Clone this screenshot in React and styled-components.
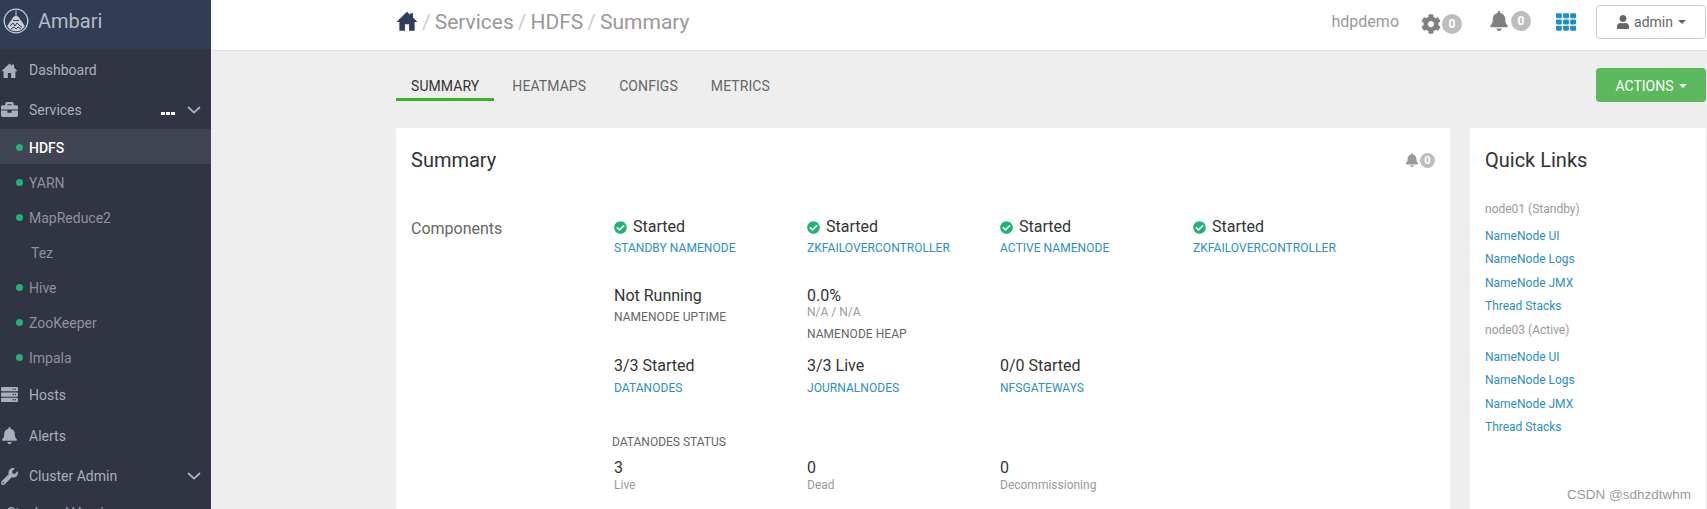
import styled, { createGlobalStyle } from "styled-components";
import {
  FaBriefcase,
  FaServer,
  FaBell,
  FaWrench,
  FaCog,
  FaUser,
  FaTh,
  FaCheckCircle,
} from "react-icons/fa";

const GlobalStyles = createGlobalStyle`
  html, body {
    margin: 0;
    padding: 0;
    height: 100%;
    overflow: hidden;
    background: #eeeeee;
  }

  body {
    font-family: Roboto, "Liberation Sans", sans-serif;
    color: #333333;
  }
`;

const Page = styled.div`
  display: grid;
  grid-template-columns: 211px 1fr;
  height: 509px;
  overflow: hidden;
`;

const Sidebar = styled.aside`
  background: #313443;
  overflow: hidden;
`;

const Brand = styled.div`
  display: flex;
  align-items: center;
  gap: 9px;
  height: 49px;
  padding: 0 0 7px 3px;
  box-sizing: border-box;
  background: #313d54;
  color: #b4bbc8;
  font-size: 20px;
  margin-bottom: 1px;
`;

const NavItem = styled.div`
  display: flex;
  align-items: center;
  height: ${(p) => p.$height || 40}px;
  padding-left: ${(p) => p.$indent || 1}px;
  color: #a8b0be;
  font-size: 14px;

  svg.main {
    width: 17px;
    height: 17px;
    margin-right: 11px;
    flex: none;
  }
`;

const Dots = styled.span`
  margin-left: auto;
  margin-right: 12px;
  margin-top: 8px;
  display: flex;
  gap: 1px;

  i {
    width: 4px;
    height: 3px;
    background: #ffffff;
  }
`;

const ChevronMark = styled.svg`
  width: 14px;
  height: 8px;
  margin-right: 10px;
  margin-left: ${(p) => (p.$push ? "auto" : "0")};
  flex: none;
`;

const SubItem = styled.div`
  display: flex;
  align-items: center;
  height: 35px;
  padding: 2px 0 0 16px;
  box-sizing: border-box;
  font-size: 14px;
  font-weight: ${(p) => (p.$active ? 500 : 400)};
  color: ${(p) => (p.$active ? "#ffffff" : "#8e929e")};
  background: ${(p) => (p.$active ? "#404350" : "transparent")};
`;

const Dot = styled.span`
  width: 7px;
  height: 7px;
  border-radius: 50%;
  margin-right: ${(p) => (p.$off ? 8 : 6)}px;
  background: ${(p) => (p.$off ? "transparent" : "#1eb475")};
  flex: none;
`;

const Main = styled.main`
  display: flex;
  flex-direction: column;
  min-width: 0;
`;

const Topbar = styled.header`
  display: flex;
  align-items: center;
  height: 50px;
  padding: 0 1px 0 185px;
  background: #ffffff;
  border-bottom: 1px solid #dfdfdf;
  flex: none;
`;

const Crumbs = styled.div`
  display: flex;
  align-items: center;
  font-size: 21px;
  color: #999999;
  margin-top: -6px;

  svg {
    width: 22px;
    height: 22px;
    color: #2c3e5c;
    margin-top: -3px;
  }

  i {
    font-style: normal;
    color: #cccccc;
    margin: 0 4px;
  }
`;

const TopRight = styled.div`
  display: flex;
  align-items: center;
  margin-left: auto;
  height: 100%;
`;

const HostName = styled.span`
  font-size: 16px;
  color: #999999;
  margin-right: 22px;
  margin-top: -8px;
`;

const IconBadge = styled.div`
  display: flex;
  align-items: center;
  gap: ${(p) => p.$gap ?? 3}px;
  margin-right: ${(p) => p.$right ?? 0}px;
  margin-top: ${(p) => p.$top ?? 0}px;
  color: ${(p) => p.$color || "#808080"};

  svg {
    width: ${(p) => p.$icon || 20}px;
    height: ${(p) => p.$icon || 20}px;
  }
`;

const Badge = styled.span`
  display: flex;
  align-items: center;
  justify-content: center;
  width: ${(p) => p.$size || 20}px;
  height: ${(p) => p.$size || 20}px;
  border-radius: 50%;
  background: #bdbdbd;
  color: #ffffff;
  font-size: ${(p) => (p.$size ? 11 : 12)}px;
  font-weight: 700;
`;

const UserButton = styled.button`
  display: flex;
  align-items: center;
  justify-content: center;
  width: 110px;
  height: 34px;
  margin-top: -6px;
  padding: 0;
  border: 1px solid #cccccc;
  border-radius: 4px;
  background: #ffffff;
  color: #666666;
  font: 14px Roboto, sans-serif;

  svg {
    width: 14px;
    height: 14px;
    margin-right: 4px;
  }
`;

const Caret = styled.span`
  width: 0;
  height: 0;
  margin-left: 5px;
  border-top: 4px solid currentColor;
  border-left: 4px solid transparent;
  border-right: 4px solid transparent;
`;

const Content = styled.div`
  padding: 17px 1px 0 185px;
`;

const TabBar = styled.div`
  display: flex;
  align-items: flex-start;
  height: 60px;
`;

const Tab = styled.div`
  height: 30px;
  line-height: 36px;
  padding: 0 15px;
  margin-right: 3px;
  font-size: 14px;
  letter-spacing: 0.08px;
  color: ${(p) => (p.$active ? "#333333" : "#666666")};
  border-bottom: 3px solid ${(p) => (p.$active ? "#3fae2a" : "transparent")};
  box-sizing: content-box;
`;

const ActionButton = styled.button`
  display: flex;
  align-items: center;
  justify-content: center;
  width: 110px;
  height: 34px;
  margin-left: auto;
  padding: 1px 0 0;
  border: none;
  border-radius: 4px;
  background: #5cb85c;
  color: #ffffff;
  font: 14px Roboto, sans-serif;
`;

const Columns = styled.div`
  display: grid;
  grid-template-columns: 1054px 236px;
  gap: 20px;
`;

const Card = styled.section`
  background: #ffffff;
  border-radius: 2px;
  height: 400px;
  padding: 0 15px;
  box-sizing: border-box;
`;

const CardHead = styled.div`
  display: flex;
  align-items: center;
  justify-content: space-between;
  height: 64px;
  font-size: 20px;
  color: #333333;
`;

const SummaryBody = styled.div`
  display: grid;
  grid-template-columns: 203px 1fr;
  margin-top: 24px;
`;

const RowTitle = styled.div`
  font-size: 16px;
  color: #666666;
  line-height: 22px;
  margin-top: 2px;
`;

const MetricGrid = styled.div`
  display: grid;
  grid-template-columns: repeat(4, 193px);
  margin-bottom: ${(p) => p.$after || 0}px;
`;

const Value = styled.div`
  display: flex;
  align-items: center;
  gap: 6px;
  font-size: 16px;
  line-height: 22px;
  color: #333333;

  svg {
    width: 13px;
    height: 13px;
    color: #1eb475;
  }
`;

const Note = styled.div`
  font-size: 12px;
  line-height: 14px;
  margin-top: -2px;
  color: #999999;
`;

const Label = styled.div`
  font-size: 12px;
  line-height: 16px;
  letter-spacing: 0.05px;
  margin-top: ${(p) => p.$top ?? 2}px;
  color: ${(p) => (p.$link ? "#2a8fc4" : "#666666")};
`;

const StatusTitle = styled.div`
  font-size: 12px;
  line-height: 16px;
  color: #666666;
  margin: 0 0 7px -2px;
`;

const Hint = styled.div`
  font-size: 12px;
  line-height: 14px;
  margin-top: -1px;
  color: #999999;
`;

const NodeName = styled.div`
  font-size: 12px;
  line-height: 16px;
  color: #999999;
  margin-top: ${(p) => p.$before || 0}px;
  margin-bottom: 10.5px;
`;

const QuickLink = styled.a`
  display: block;
  font-size: 12px;
  line-height: 16px;
  height: 23.5px;
  color: #2a8fc4;
`;

const QuickBody = styled.div`
  margin-top: 9px;
`;

const Watermark = styled.div`
  position: absolute;
  right: 16px;
  bottom: 7px;
  font: 13.5px "Liberation Sans", sans-serif;
  color: #9a9a9a;
`;

function HomeIcon({ className }) {
  return (
    <svg className={className} viewBox="0 0 24 24" fill="currentColor">
      <path d="M12 2 0.5 13h3.2v9.5h6v-7h4.6v7h6V13h3.2L18.5 8.2V3.5h-3v1.9z" />
    </svg>
  );
}

function Chevron({ push }) {
  return (
    <ChevronMark $push={push} viewBox="0 0 14 8">
      <path d="M1 1l6 5.6L13 1" fill="none" stroke="#9fb4cc" strokeWidth="1.8" />
    </ChevronMark>
  );
}

function AmbariLogo() {
  return (
    <svg width="26" height="26" viewBox="0 0 26 26">
      <circle cx="13" cy="13" r="11.8" fill="none" stroke="#c9ced8" strokeWidth="1.3" />
      <path d="M13 2.5v6" stroke="#c9ced8" strokeWidth="1" />
      <path
        d="M13 8c2.4 0 3.4 1.6 4 3.4 1.6 1.4 3.2 3.8 4.8 6.8-1.8 3-5 5-8.8 5s-7-2-8.8-5c1.6-3 3.2-5.4 4.8-6.8C9.6 9.6 10.6 8 13 8z"
        fill="#c9ced8"
      />
      <path
        d="M7 18l3-3 2 3 2-3 3 3 2 1M8 21l3-2 2 2 2-2 3 2M10 12.5h6"
        fill="none"
        stroke="#313d54"
        strokeWidth="1"
      />
    </svg>
  );
}

function Metric({ value, note, label, link, labelTop, started }) {
  return (
    <div>
      <Value>
        {started && <FaCheckCircle />}
        {value}
      </Value>
      {note && <Note>{note}</Note>}
      <Label $link={link} $top={labelTop}>
        {label}
      </Label>
    </div>
  );
}

function Stat({ value, hint }) {
  return (
    <div>
      <Value>{value}</Value>
      <Hint>{hint}</Hint>
    </div>
  );
}

const services = [
  { name: "HDFS", active: true },
  { name: "YARN" },
  { name: "MapReduce2" },
  { name: "Tez", off: true },
  { name: "Hive" },
  { name: "ZooKeeper" },
  { name: "Impala" },
];

const nodeLinks = ["NameNode UI", "NameNode Logs", "NameNode JMX", "Thread Stacks"];

function App() {
  return (
    <>
      <GlobalStyles />
      <Page>
        <Sidebar>
          <Brand>
            <AmbariLogo />
            Ambari
          </Brand>
          <NavItem>
            <HomeIcon className="main" />
            Dashboard
          </NavItem>
          <NavItem $height={39}>
            <FaBriefcase className="main" />
            Services
            <Dots>
              <i />
              <i />
              <i />
            </Dots>
            <Chevron />
          </NavItem>
          {services.map((s) => (
            <SubItem key={s.name} $active={s.active}>
              <Dot $off={s.off} />
              {s.name}
            </SubItem>
          ))}
          <NavItem $height={41}>
            <FaServer className="main" />
            Hosts
          </NavItem>
          <NavItem $height={41}>
            <FaBell className="main" />
            Alerts
          </NavItem>
          <NavItem>
            <FaWrench className="main" />
            Cluster Admin
            <Chevron push />
          </NavItem>
          <NavItem $indent={7} $height={34}>
            Stack and Versions
          </NavItem>
        </Sidebar>

        <Main>
          <Topbar>
            <Crumbs>
              <HomeIcon />
              <i>/</i>
              Services
              <i>/</i>
              HDFS
              <i>/</i>
              Summary
            </Crumbs>
            <TopRight>
              <HostName>hdpdemo</HostName>
              <IconBadge $right={27} $top={-3} $gap={1}>
                <FaCog />
                <Badge>0</Badge>
              </IconBadge>
              <IconBadge $right={25} $top={-8} $gap={2}>
                <FaBell />
                <Badge>0</Badge>
              </IconBadge>
              <IconBadge $right={20} $top={-6} $color="#1c8fc7">
                <FaTh />
              </IconBadge>
              <UserButton>
                <FaUser />
                admin
                <Caret />
              </UserButton>
            </TopRight>
          </Topbar>

          <Content>
            <TabBar>
              <Tab $active>SUMMARY</Tab>
              <Tab>HEATMAPS</Tab>
              <Tab>CONFIGS</Tab>
              <Tab>METRICS</Tab>
              <ActionButton>
                ACTIONS
                <Caret />
              </ActionButton>
            </TabBar>

            <Columns>
              <Card>
                <CardHead>
                  Summary
                  <IconBadge $gap={1} $icon={14} $color="#999999">
                    <FaBell />
                    <Badge $size={15}>0</Badge>
                  </IconBadge>
                </CardHead>
                <SummaryBody>
                  <RowTitle>Components</RowTitle>
                  <div>
                    <MetricGrid $after={29}>
                      <Metric started value="Started" label="STANDBY NAMENODE" link />
                      <Metric started value="Started" label="ZKFAILOVERCONTROLLER" link />
                      <Metric started value="Started" label="ACTIVE NAMENODE" link />
                      <Metric started value="Started" label="ZKFAILOVERCONTROLLER" link />
                    </MetricGrid>
                    <MetricGrid $after={13}>
                      <Metric value="Not Running" label="NAMENODE UPTIME" />
                      <Metric value="0.0%" note="N/A / N/A" label="NAMENODE HEAP" labelTop={7} />
                    </MetricGrid>
                    <MetricGrid $after={38}>
                      <Metric value="3/3 Started" label="DATANODES" labelTop={3} link />
                      <Metric value="3/3 Live" label="JOURNALNODES" labelTop={3} link />
                      <Metric value="0/0 Started" label="NFSGATEWAYS" labelTop={3} link />
                    </MetricGrid>
                    <StatusTitle>DATANODES STATUS</StatusTitle>
                    <MetricGrid>
                      <Stat value="3" hint="Live" />
                      <Stat value="0" hint="Dead" />
                      <Stat value="0" hint="Decommissioning" />
                    </MetricGrid>
                  </div>
                </SummaryBody>
              </Card>

              <Card>
                <CardHead>Quick Links</CardHead>
                <QuickBody>
                  <NodeName>node01 (Standby)</NodeName>
                  {nodeLinks.map((l) => (
                    <QuickLink key={l}>{l}</QuickLink>
                  ))}
                  <NodeName $before={0.5}>node03 (Active)</NodeName>
                  {nodeLinks.map((l) => (
                    <QuickLink key={l}>{l}</QuickLink>
                  ))}
                </QuickBody>
              </Card>
            </Columns>
          </Content>
        </Main>
      </Page>
      <Watermark>CSDN @sdhzdtwhm</Watermark>
    </>
  );
}

export default App;
